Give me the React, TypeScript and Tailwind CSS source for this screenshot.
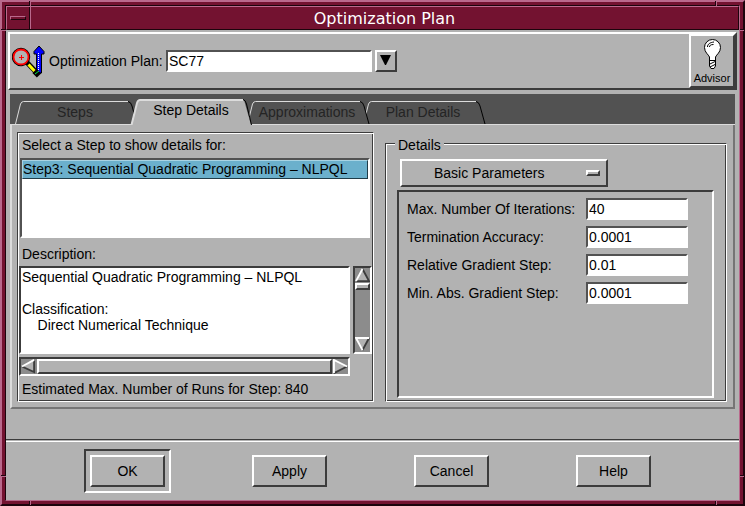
import React from "react";

const RAISED = "border-2 border-t-white border-l-white border-r-[#3c3c3c] border-b-[#3c3c3c]";
const SUNKEN = "border-2 border-t-[#3c3c3c] border-l-[#3c3c3c] border-r-white border-b-white";
const FIELD =
  "border-2 border-t-[#525252] border-l-[#525252] border-r-white border-b-white bg-white text-sm leading-4 rounded-none outline-none";
const ETCHED =
  "border border-t-[#3c3c3c] border-l-[#3c3c3c] border-r-white border-b-white shadow-[inset_1px_1px_0_#fff,inset_-1px_-1px_0_#3c3c3c]";

const DESCRIPTION = `Sequential Quadratic Programming – NLPQL

Classification:
    Direct Numerical Technique`;

const PARAMETERS = [
  { id: "iterations", label: "Max. Number Of Iterations:", value: "40" },
  { id: "accuracy", label: "Termination Accuracy:", value: "0.0001" },
  { id: "relative", label: "Relative Gradient Step:", value: "0.01" },
  { id: "absolute", label: "Min. Abs. Gradient Step:", value: "0.0001" },
];

const TABS = [
  { name: "Steps", layer: "z-30" },
  { name: "Step Details", layer: "z-40" },
  { name: "Approximations", layer: "z-20" },
  { name: "Plan Details", layer: "z-10" },
];

function SearchArrowIcon() {
  return (
    <svg width="33" height="34" viewBox="0 0 33 34" className="shrink-0" aria-hidden="true">
      <path d="M27 2 L32 7.5 V10 H29.5 V29 H24.5 V10 H22 V7.5 Z" fill="#0000ff" stroke="#000" />
      <path d="M26.5 9 V28" stroke="#fff" strokeDasharray="1 1" />
      <path d="M15 18.5 L25 29" stroke="#000" strokeWidth="5" />
      <path d="M16.5 20.5 L23 27.5" stroke="#ffff00" strokeWidth="3" />
      <path d="M22.5 27 L27 31.5" stroke="#000" strokeWidth="6" />
      <path d="M23 30 L27 27" stroke="#00e050" strokeWidth="1" />
      <circle cx="9" cy="13" r="7.5" fill="none" stroke="#000" strokeWidth="3.4" />
      <circle cx="9" cy="13" r="7.5" fill="#b2b2b2" stroke="#f00" strokeWidth="1.8" />
      <path d="M7 13.5 H12 M9.5 11 V16" stroke="#f00" />
    </svg>
  );
}

function BulbIcon() {
  return (
    <svg width="19" height="32" viewBox="0 0 19 32" aria-hidden="true">
      <path
        d="M6.5 19 C5.5 16.5 1.5 14.5 1.5 9.5 A8 8 0 0 1 17.5 9.5 C17.5 14.5 13.5 16.5 12.5 19 V28 L11 30.5 H8 L6.5 28 Z"
        fill="#fff"
        stroke="#000"
      />
      <path d="M4.5 9 C4.5 6 7 4.5 11 4 M6.5 9 C6.5 7.5 7.5 6.5 10.5 6.5" fill="none" stroke="#000" />
      <path d="M6.5 22.5 H12.5 M7 26 L12 23.5 M7 29 L12 26.5" stroke="#000" />
    </svg>
  );
}

function TabShape({ active }: { active: boolean }) {
  return (
    <svg width="126" height="31" viewBox="0 0 126 31" className="absolute top-0 -left-[3px] max-w-none" aria-hidden="true">
      {active ? (
        <>
          <path d="M1 31 L8 6 H114 L121 31 Z" fill="#b2b2b2" />
          <path d="M1.5 31 L7 9 Q8 6 10 6 H113" fill="none" stroke="#dcdcdc" strokeWidth="2" />
          <path d="M113 5.5 Q115.5 6 116.5 10 L121.5 31" fill="none" stroke="#000" strokeWidth="1" />
        </>
      ) : (
        <>
          <path d="M1 30 L7 10 Q8 7 10 7 H114 Q117 8 118 12 L123 30 Z" fill="#525252" />
          <path d="M1.5 30 L6.5 10 Q7.5 7.5 9.5 7.5 H114" fill="none" stroke="#dcdcdc" />
          <path d="M114 7.5 Q117 8 118 12 L123 30" fill="none" stroke="#000" />
        </>
      )}
    </svg>
  );
}

function ScrollArrow({ direction }: { direction: "up" | "down" | "left" | "right" }) {
  const shapes = {
    up: { fill: "8,1 15,14 1,14", light: "M8 1 L1 14", dark: "M8 1 L15 14 H1" },
    down: { fill: "1,1 15,1 8,14", light: "M8 14 L1 1 H15", dark: "M15 1 L8 14" },
    left: { fill: "1,8 14,1 14,15", light: "M1 8 L14 1", dark: "M14 1 V14 L1 8" },
    right: { fill: "1,1 15,8 1,15", light: "M1 15 V1 L15 8", dark: "M15 8 L1 15" },
  };
  const shape = shapes[direction];
  return (
    <button type="button" aria-label={`Scroll ${direction}`} className="block shrink-0">
      <svg width="15" height="15" viewBox="0 0 16 16" aria-hidden="true">
        <polygon points={shape.fill} fill="#b2b2b2" />
        <path d={shape.dark} fill="none" stroke="#3c3c3c" strokeWidth="2" />
        <path d={shape.light} fill="none" stroke="#fff" strokeWidth="2" />
      </svg>
    </button>
  );
}

function FrameNotches() {
  return (
    <div aria-hidden="true">
      <i className="absolute -top-[1px] left-[27px] h-[5px] w-[2px] border-l border-l-[#1c040c] bg-[#b9698c]" />
      <i className="absolute -top-[1px] right-[26px] h-[5px] w-[2px] border-l border-l-[#1c040c] bg-[#b9698c]" />
      <i className="absolute -bottom-[1px] left-[27px] h-[4px] w-[2px] border-l border-l-[#1c040c] bg-[#b9698c]" />
      <i className="absolute right-[26px] -bottom-[1px] h-[4px] w-[2px] border-l border-l-[#1c040c] bg-[#b9698c]" />
      <i className="absolute top-[27px] -left-[1px] h-[2px] w-[5px] border-t border-t-[#1c040c] bg-[#b9698c]" />
      <i className="absolute top-[27px] -right-[1px] h-[2px] w-[4px] border-t border-t-[#1c040c] bg-[#b9698c]" />
      <i className="absolute bottom-[27px] -left-[1px] h-[2px] w-[5px] border-t border-t-[#1c040c] bg-[#b9698c]" />
      <i className="absolute -right-[1px] bottom-[27px] h-[2px] w-[4px] border-t border-t-[#1c040c] bg-[#b9698c]" />
    </div>
  );
}

function TitleBar() {
  return (
    <header className="flex h-6 border border-t-[#b9698c] border-r-[#1c040c] border-b-[#1c040c] border-l-[#b9698c]">
      <button
        type="button"
        aria-label="Window menu"
        className="flex w-6 shrink-0 items-center border-r border-r-[#b9698c] pl-[3px] shadow-[inset_-1px_0_0_#1c040c]"
      >
        <span className="h-[4px] w-4 border border-t-[#b9698c] border-r-[#1c040c] border-b-[#1c040c] border-l-[#b9698c]" />
      </button>
      <h1 className="flex-1 text-center font-['DejaVu_Sans','Noto_Sans',sans-serif] text-base leading-6 text-white">
        Optimization Plan
      </h1>
    </header>
  );
}

function PlanBar() {
  return (
    <div className={`mx-[2px] mt-[2px] flex h-[58px] items-center ${RAISED}`}>
      <div className="flex flex-1 items-center pl-[2px]">
        <SearchArrowIcon />
        <label htmlFor="plan" className="ml-1 w-[117px] shrink-0 text-sm leading-4 whitespace-nowrap">
          Optimization Plan:
        </label>
        <input id="plan" defaultValue="SC77" className={`${FIELD} h-[22px] w-[206px] pl-[1px]`} />
        <button
          type="button"
          aria-label="Choose a plan"
          className={`ml-[3px] flex size-[22px] items-center justify-center ${RAISED}`}
        >
          <svg width="12" height="12" viewBox="0 0 12 12" aria-hidden="true">
            <path d="M0 0 H11 L6 10 H5 Z" fill="#000" />
          </svg>
        </button>
      </div>
      <button
        type="button"
        className={`flex h-full w-[46px] flex-col items-center justify-between pt-[2px] text-[11px] leading-4 ${RAISED}`}
      >
        <BulbIcon />
        Advisor
      </button>
    </div>
  );
}

function Tabs() {
  return (
    <div role="tablist" className="mx-[4px] mt-[4px] flex h-[31px] border-b border-b-[#dcdcdc] bg-[#525252] pl-[7px]">
      {TABS.map((tab) => {
        const active = tab.name === "Step Details";
        return (
          <button
            key={tab.name}
            type="button"
            role="tab"
            aria-selected={active}
            className={`relative h-[31px] w-[116px] text-sm leading-4 ${tab.layer} ${
              active ? "text-black" : "pt-[4px] text-[#242424]"
            }`}
          >
            <TabShape active={active} />
            <span className="relative">{tab.name}</span>
          </button>
        );
      })}
    </div>
  );
}

function StepPanel() {
  return (
    <section className={`w-[357px] shrink-0 p-[1px] ${ETCHED}`}>
      <h2 id="steps-label" className="h-6 pl-[3px] leading-[22px]">
        Select a Step to show details for:
      </h2>
      <ul role="listbox" aria-labelledby="steps-label" className={`mr-[2px] ml-[1px] h-20 ${FIELD}`}>
        <li
          role="option"
          aria-selected="true"
          className="h-[19px] border border-t-[#a8d4e4] border-r-[#1f3c48] border-b-[#1f3c48] border-l-[#a8d4e4] bg-[#6bb0cc] leading-[17px] whitespace-nowrap"
        >
          Step3: Sequential Quadratic Programming – NLPQL
        </li>
      </ul>
      <label htmlFor="description" className="block h-7 pt-1 pl-[3px] leading-6">
        Description:
      </label>
      <div className="flex gap-[3px]">
        <div className="flex flex-1 flex-col gap-[3px]">
          <textarea
            id="description"
            readOnly
            defaultValue={DESCRIPTION}
            className={`block h-[88px] w-full resize-none overflow-hidden bg-white pt-[1px] pl-[1px] text-sm leading-4 whitespace-pre outline-none ${SUNKEN}`}
          />
          <div className={`flex h-[19px] gap-[1px] bg-[#8c8c8c] ${SUNKEN}`}>
            <ScrollArrow direction="left" />
            <div className={`flex-1 bg-[#b2b2b2] ${RAISED}`} />
            <ScrollArrow direction="right" />
          </div>
        </div>
        <div className={`flex h-[88px] w-[19px] flex-col bg-[#8c8c8c] ${SUNKEN}`}>
          <ScrollArrow direction="up" />
          <div className={`h-[7px] bg-[#b2b2b2] ${RAISED}`} />
          <div className="flex-1" />
          <ScrollArrow direction="down" />
        </div>
      </div>
      <p className="h-6 pl-[3px] leading-[26px]">Estimated Max. Number of Runs for Step: 840</p>
    </section>
  );
}

function DetailsPanel() {
  return (
    <fieldset className={`flex min-w-0 flex-1 flex-col pr-[12px] pb-[3px] pl-[11px] ${ETCHED}`}>
      <legend className="-ml-[2px] h-[22px] bg-[#b2b2b2] px-[3px] pt-[4px] leading-[18px]">Details</legend>
      <div className="relative mt-[5px] mb-[3px] ml-[3px] h-7 w-[208px]">
        <select
          aria-label="Parameter group"
          className={`h-7 w-full appearance-none rounded-none bg-[#b2b2b2] pl-8 text-sm ${RAISED}`}
        >
          <option>Basic Parameters</option>
        </select>
        <span className={`pointer-events-none absolute top-[11px] right-2 h-[6px] w-[14px] ${RAISED}`} />
      </div>
      <div className={`flex flex-1 flex-col gap-[6px] pt-[6px] pl-2 ${SUNKEN}`}>
        {PARAMETERS.map((parameter) => (
          <div key={parameter.id} className="flex items-center">
            <label htmlFor={parameter.id} className="w-[179px] whitespace-nowrap">
              {parameter.label}
            </label>
            <input id={parameter.id} defaultValue={parameter.value} className={`${FIELD} h-[22px] w-[102px] pl-[1px]`} />
          </div>
        ))}
      </div>
    </fieldset>
  );
}

function Footer() {
  return (
    <footer className="mt-[30px] flex-1 border-t border-t-[#3c3c3c] pt-[1px]">
      <div className="flex justify-between border-t border-t-white pt-[7px] pr-[82px] pb-[7px] pl-[78px]">
        {["OK", "Apply", "Cancel", "Help"].map((name) => (
          <div key={name} className={name === "OK" ? `p-[4px] ${SUNKEN}` : "p-[6px]"}>
            <button type="button" className={`h-8 w-[75px] text-sm leading-4 ${RAISED}`}>
              {name}
            </button>
          </div>
        ))}
      </div>
    </footer>
  );
}

export default function App() {
  return (
    <div className="relative flex min-h-screen flex-col border-2 border-t-[#b9698c] border-r-[#1c040c] border-b-[#1c040c] border-l-[#b9698c] bg-[#731230] p-[3px] font-['Liberation_Sans',Arial,sans-serif] text-sm leading-4 text-black">
      <div className="flex flex-1 flex-col border border-t-[#1c040c] border-r-[#b9698c] border-b-[#b9698c] border-l-[#1c040c]">
        <TitleBar />
        <main className="flex flex-1 flex-col bg-[#b2b2b2]">
          <PlanBar />
          <Tabs />
          <div className="mx-[4px] flex gap-[11px] border-2 border-t-0 border-r-[#757575] border-b-[#757575] border-l-[#dcdcdc] pt-[7px] pr-[6px] pb-[5px] pl-[5px]">
            <StepPanel />
            <DetailsPanel />
          </div>
          <Footer />
        </main>
      </div>
      <FrameNotches />
    </div>
  );
}
